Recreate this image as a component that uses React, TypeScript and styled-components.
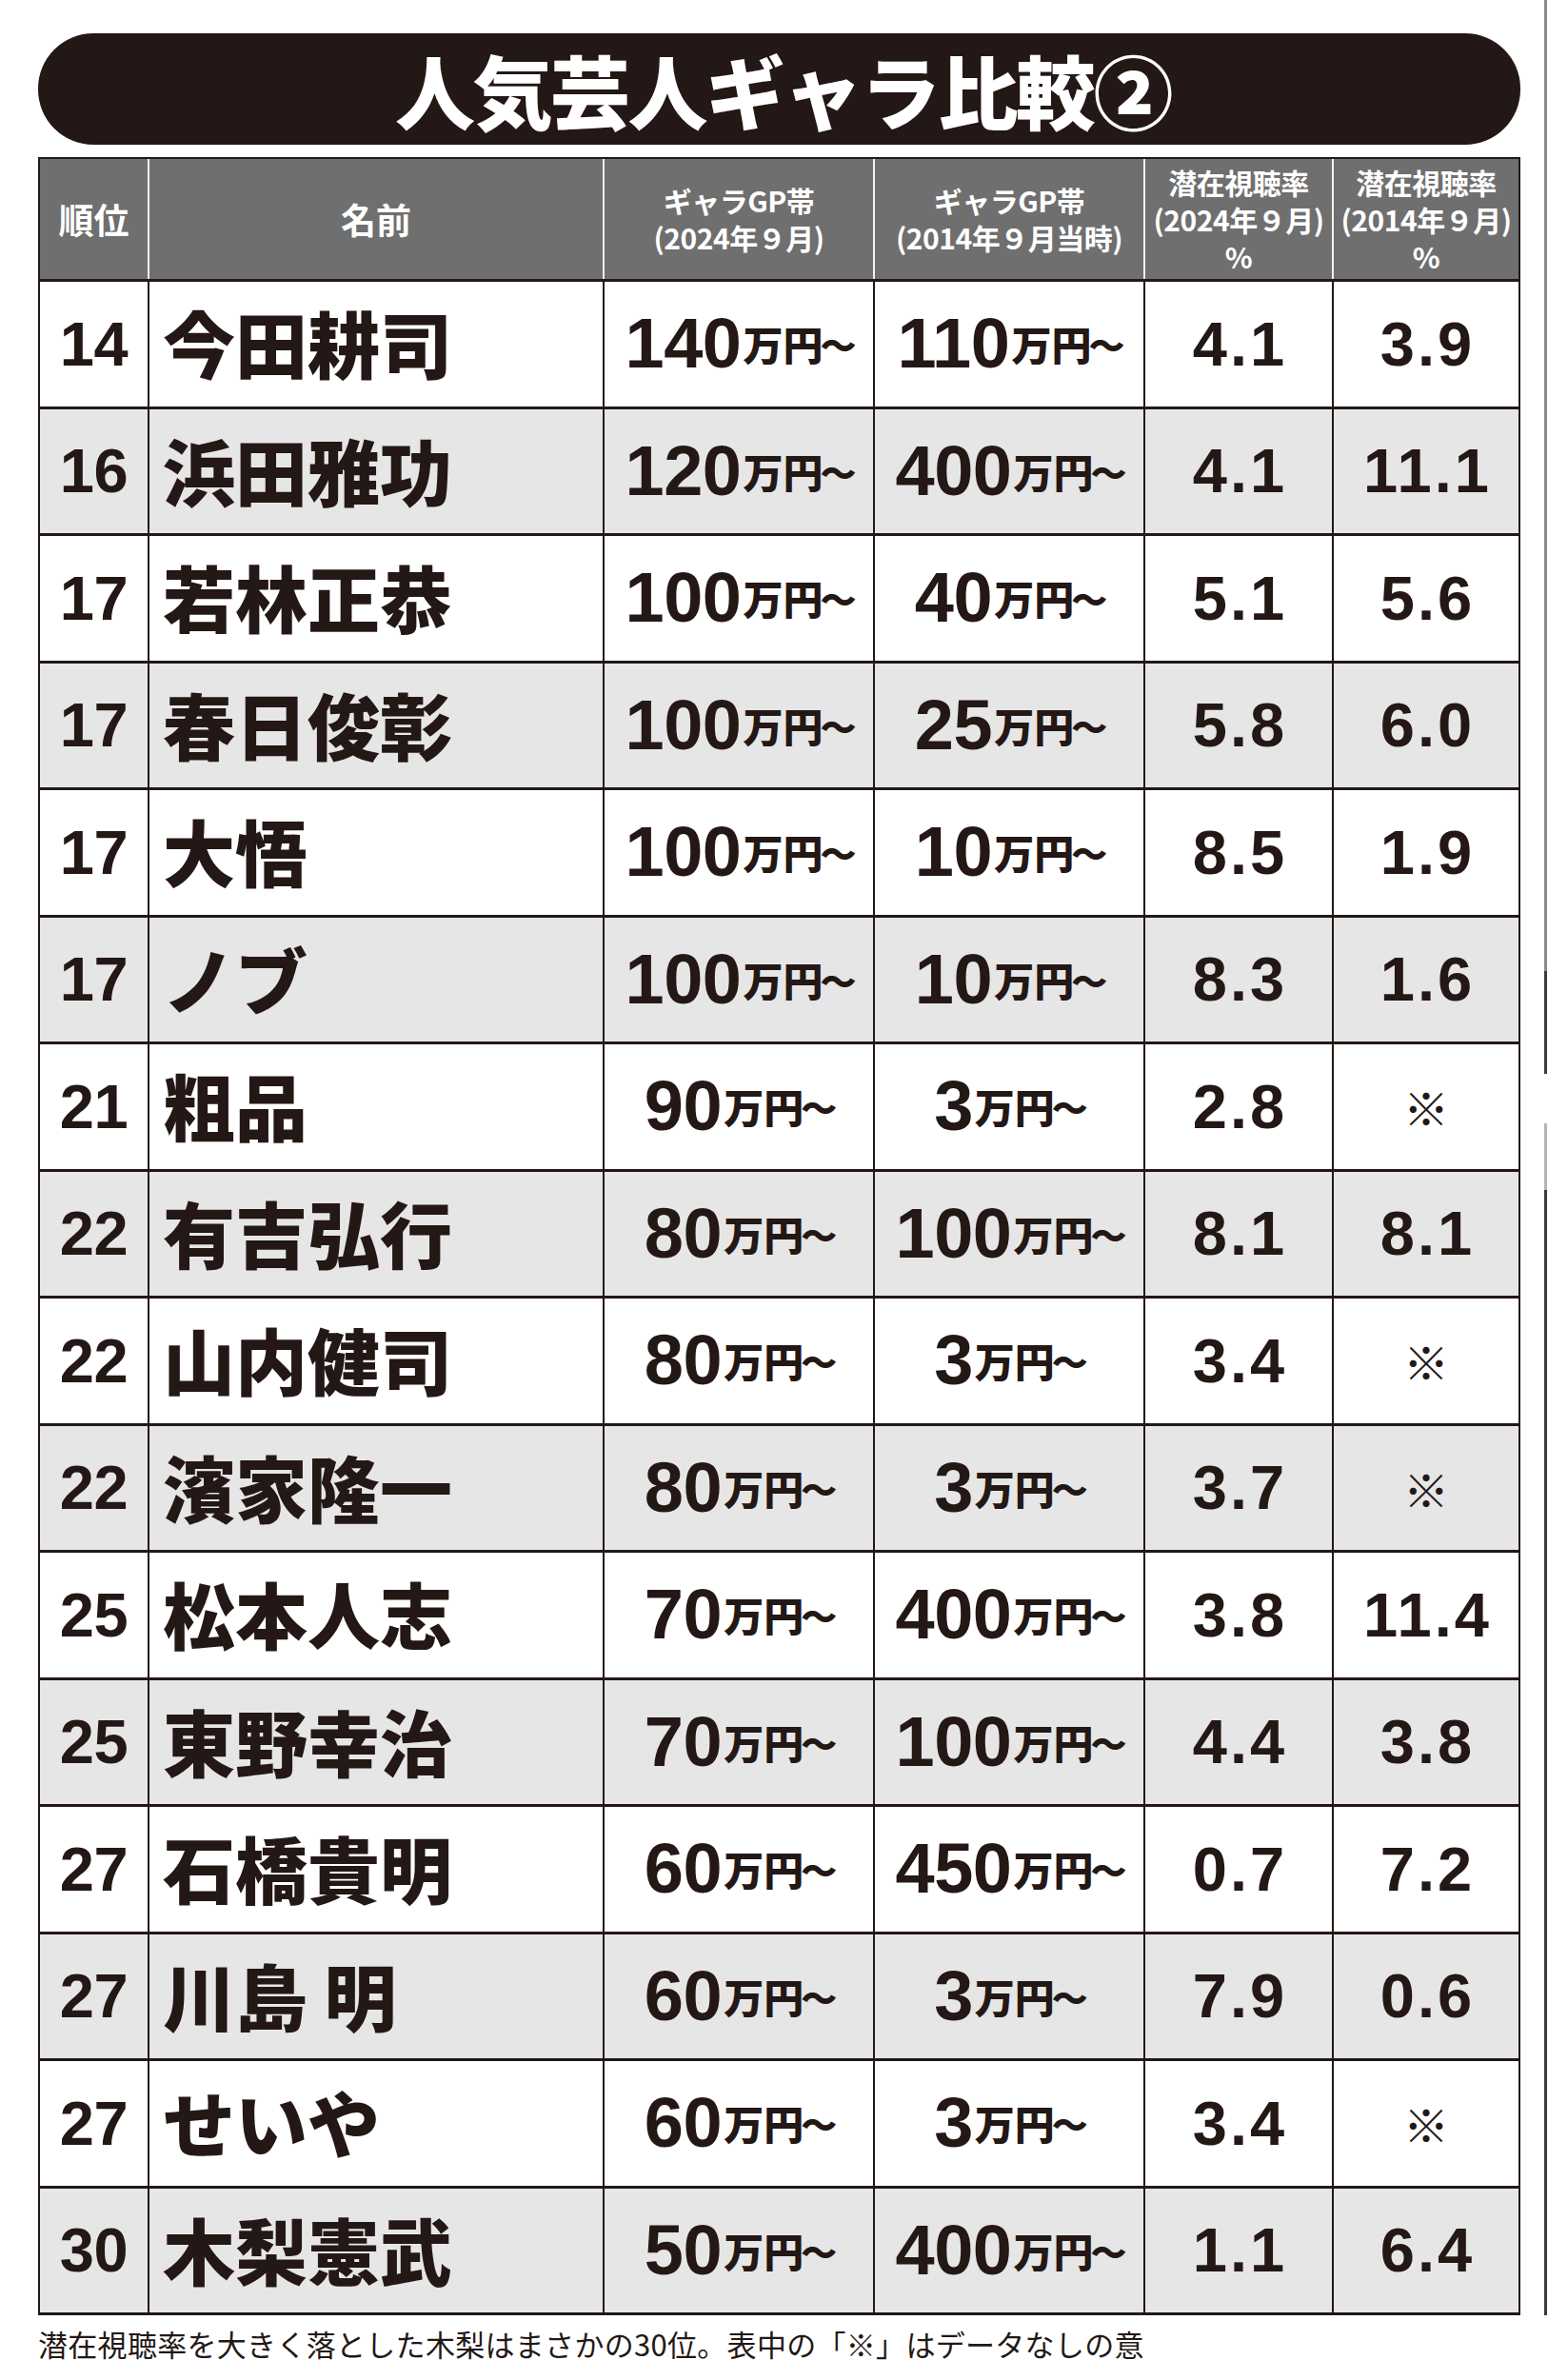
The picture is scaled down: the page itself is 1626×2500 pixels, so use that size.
import React from "react";
import styled, { createGlobalStyle } from "styled-components";

const INK = "#231815";
const CJK = `"Noto Sans CJK JP", "Noto Sans", sans-serif`;
const NUM = `"Liberation Sans", Arial, sans-serif`;
const COLS = "113px 476px 282px 282px 196px 194px";

const GlobalStyle = createGlobalStyle`
  html, body { margin: 0; padding: 0; background: #ffffff; }
  body { font-family: ${CJK}; color: ${INK}; }
`;

const Page = styled.div`
  display: flex;
  width: 1626px;
  min-height: 2500px;
  background: #ffffff;
`;

const Main = styled.div`
  display: flex;
  flex-direction: column;
  width: 1557px;
  padding: 35px 0 0 40px;
`;

const EdgeStrip = styled.div`
  display: flex;
  flex-direction: column;
  width: 3px;
  margin-left: 25px;
`;

const EdgeSegment = styled.div<{ $h: number; $tone: string }>`
  height: ${(p) => p.$h}px;
  background: ${(p) => p.$tone};
`;

const TitleBar = styled.div`
  height: 117px;
  border-radius: 58px;
  background: ${INK};
  display: flex;
  align-items: center;
  justify-content: center;
  margin-bottom: 13px;
`;

const Title = styled.h1`
  margin: 0;
  font-family: ${CJK};
  font-weight: 900;
  font-size: 84px;
  line-height: 1;
  letter-spacing: -2.5px;
  color: #ffffff;
  padding-left: 8px;
`;

const Table = styled.div`
  display: flex;
  flex-direction: column;
  border-left: 2px solid ${INK};
  border-right: 2px solid ${INK};
  border-top: 2px solid ${INK};
  border-bottom: 3px solid ${INK};
`;

const HeaderRow = styled.div`
  display: grid;
  grid-template-columns: ${COLS};
  column-gap: 2px;
  height: 126px;
  background: #f2f2f2;
  border-bottom: 3px solid ${INK};
`;

const HeadCell = styled.div<{ $big?: boolean }>`
  background: #6f6f6f;
  color: #ffffff;
  display: flex;
  flex-direction: column;
  align-items: center;
  justify-content: center;
  font-family: ${CJK};
  font-weight: 700;
  font-size: ${(p) => (p.$big ? 37 : 30)}px;
  line-height: 39px;
  white-space: nowrap;
  letter-spacing: ${(p) => (p.$big ? 0 : -0.5)}px;
`;

const Body = styled.div`
  display: grid;
  grid-template-columns: ${COLS};
  grid-auto-rows: 130.5px;
  column-gap: 2px;
  row-gap: 3px;
  background: ${INK};
`;

const Cell = styled.div<{ $shade: boolean; $align?: "left" | "center" }>`
  background: ${(p) => (p.$shade ? "#e6e6e6" : "#ffffff")};
  display: flex;
  align-items: center;
  justify-content: ${(p) => (p.$align === "left" ? "flex-start" : "center")};
  padding-left: ${(p) => (p.$align === "left" ? 14 : 0)}px;
  color: ${INK};
  white-space: nowrap;
  overflow: hidden;
`;

const Rank = styled.span`
  font-family: ${NUM};
  font-weight: 700;
  font-size: 65px;
  line-height: 1;
  letter-spacing: -0.5px;
`;

const Name = styled.span`
  font-family: ${CJK};
  font-weight: 900;
  font-size: 76px;
  line-height: 1;
  padding-bottom: 4px;
`;

const Money = styled.span`
  display: flex;
  align-items: center;
`;

const MoneyNum = styled.span`
  font-family: ${NUM};
  font-weight: 700;
  font-size: 74px;
  line-height: 1;
  letter-spacing: -0.5px;
`;

const MoneyUnit = styled.span`
  font-family: ${CJK};
  font-weight: 900;
  font-size: 42px;
  line-height: 1;
  margin-left: 2px;
`;

const Tilde = styled.span`
  font-family: ${CJK};
  font-weight: 900;
  font-size: 38px;
  line-height: 1;
  margin: 0 -4px 0 -3px;
`;

const Rate = styled.span`
  font-family: ${NUM};
  font-weight: 700;
  font-size: 65px;
  line-height: 1;
  letter-spacing: 3px;
  padding-left: 3px;
`;

const NoData = styled.span`
  font-family: ${CJK};
  font-weight: 400;
  font-size: 48px;
  line-height: 1;
`;

const Caption = styled.p`
  margin: 11px 0 0 0;
  font-family: ${CJK};
  font-weight: 400;
  font-size: 31px;
  line-height: 37px;
  color: ${INK};
  letter-spacing: 0.3px;
`;

type Row = [string, string, string, string, string, string];

const rows: Row[] = [
  ["14", "今田耕司", "140", "110", "4.1", "3.9"],
  ["16", "浜田雅功", "120", "400", "4.1", "11.1"],
  ["17", "若林正恭", "100", "40", "5.1", "5.6"],
  ["17", "春日俊彰", "100", "25", "5.8", "6.0"],
  ["17", "大悟", "100", "10", "8.5", "1.9"],
  ["17", "ノブ", "100", "10", "8.3", "1.6"],
  ["21", "粗品", "90", "3", "2.8", "※"],
  ["22", "有吉弘行", "80", "100", "8.1", "8.1"],
  ["22", "山内健司", "80", "3", "3.4", "※"],
  ["22", "濱家隆一", "80", "3", "3.7", "※"],
  ["25", "松本人志", "70", "400", "3.8", "11.4"],
  ["25", "東野幸治", "70", "100", "4.4", "3.8"],
  ["27", "石橋貴明", "60", "450", "0.7", "7.2"],
  ["27", "川島 明", "60", "3", "7.9", "0.6"],
  ["27", "せいや", "60", "3", "3.4", "※"],
  ["30", "木梨憲武", "50", "400", "1.1", "6.4"],
];

const MoneyValue = ({ v }: { v: string }) => (
  <Money>
    <MoneyNum>{v}</MoneyNum>
    <MoneyUnit>万円</MoneyUnit>
    <Tilde>〜</Tilde>
  </Money>
);

const RateValue = ({ v }: { v: string }) =>
  v === "※" ? <NoData>※</NoData> : <Rate>{v}</Rate>;

const edge: { h: number; tone: string }[] = [
  { h: 1020, tone: "#8c8c8c" },
  { h: 108, tone: "#3a3a3a" },
  { h: 52, tone: "transparent" },
  { h: 70, tone: "#b5b5b5" },
  { h: 1182, tone: "#3a3a3a" },
];

export default function App() {
  return (
    <Page>
      <GlobalStyle />
      <Main>
        <TitleBar>
          <Title>人気芸人ギャラ比較②</Title>
        </TitleBar>
        <Table>
          <HeaderRow>
            <HeadCell $big>順位</HeadCell>
            <HeadCell $big>名前</HeadCell>
            <HeadCell>
              <span>ギャラGP帯</span>
              <span>(2024年９月)</span>
            </HeadCell>
            <HeadCell>
              <span>ギャラGP帯</span>
              <span>(2014年９月当時)</span>
            </HeadCell>
            <HeadCell>
              <span>潜在視聴率</span>
              <span>(2024年９月)</span>
              <span>%</span>
            </HeadCell>
            <HeadCell>
              <span>潜在視聴率</span>
              <span>(2014年９月)</span>
              <span>%</span>
            </HeadCell>
          </HeaderRow>
          <Body>
            {rows.map((r, i) => {
              const shade = i % 2 === 1;
              return (
                <React.Fragment key={i}>
                  <Cell $shade={shade}>
                    <Rank>{r[0]}</Rank>
                  </Cell>
                  <Cell $shade={shade} $align="left">
                    <Name>{r[1]}</Name>
                  </Cell>
                  <Cell $shade={shade}>
                    <MoneyValue v={r[2]} />
                  </Cell>
                  <Cell $shade={shade}>
                    <MoneyValue v={r[3]} />
                  </Cell>
                  <Cell $shade={shade}>
                    <RateValue v={r[4]} />
                  </Cell>
                  <Cell $shade={shade}>
                    <RateValue v={r[5]} />
                  </Cell>
                </React.Fragment>
              );
            })}
          </Body>
        </Table>
        <Caption>
          潜在視聴率を大きく落とした木梨はまさかの30位。表中の「※」はデータなしの意
        </Caption>
      </Main>
      <EdgeStrip>
        {edge.map((s, i) => (
          <EdgeSegment key={i} $h={s.h} $tone={s.tone} />
        ))}
      </EdgeStrip>
    </Page>
  );
}
